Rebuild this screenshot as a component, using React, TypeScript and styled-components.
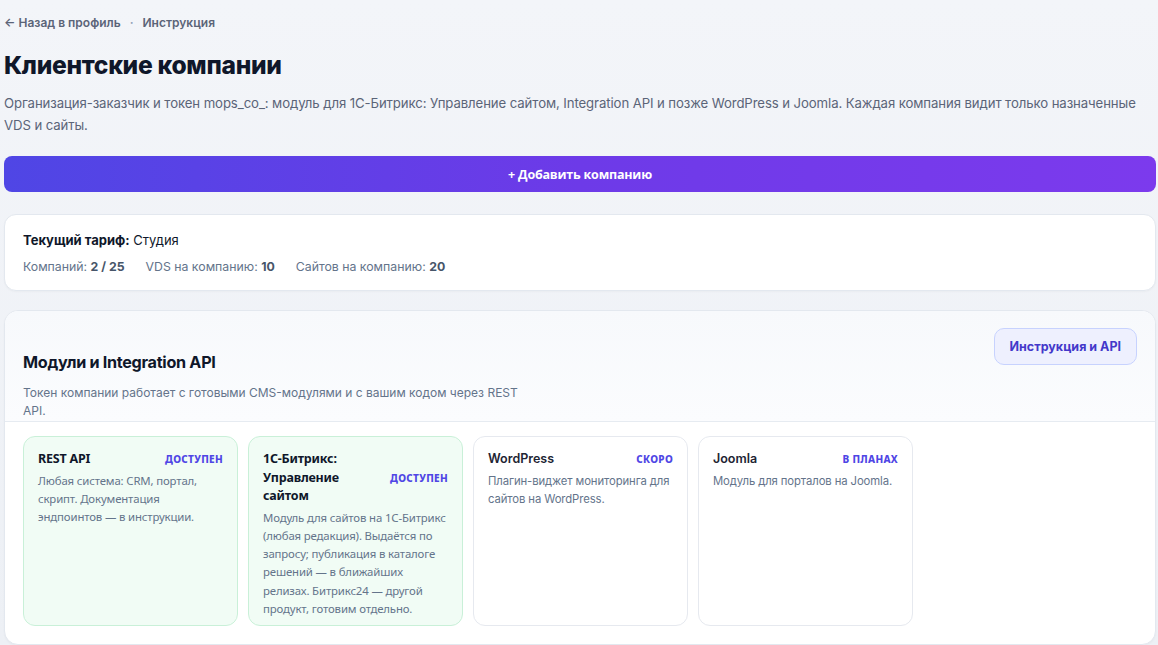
import React from 'react';
import styled, { createGlobalStyle } from 'styled-components';

const Global = createGlobalStyle`
  html, body {
    margin: 0;
    padding: 0;
    background: #eff2f7;
  }
  body {
    font-family: Inter, "Noto Sans", sans-serif;
    color: #0f172a;
  }
`

const Page = styled.div`
  padding: 12px 2px 0 4px;
  background: linear-gradient(180deg, #f3f5f9 0%, #edf0f5 100%);
  min-height: 645px;
  box-sizing: border-box;
`

const Crumbs = styled.div`
  display: flex;
  align-items: center;
  gap: 9px;
  font-size: 12px;
  font-weight: 600;
  color: #5b6478;
  height: 20px;
`

const Dot = styled.span`
  color: #94a3b8;
`

const Title = styled.h1`
  margin: 18px 0 0;
  font-size: 24.6px;
  line-height: 30px;
  font-weight: 800;
  letter-spacing: -0.3px;
  color: #0f172a;
`

const Lead = styled.p`
  margin: 12px 0 0;
  font-size: 13.2px;
  line-height: 22px;
  letter-spacing: -0.1px;
  color: #5b6478;
  max-width: 1140px;
`

const AddButton = styled.button`
  display: block;
  width: 100%;
  height: 36px;
  margin-top: 20px;
  border: 0;
  border-radius: 8px;
  background: linear-gradient(90deg, #4f46e5 0%, #6d3ae8 50%, #7c3aed 100%);
  color: #fff;
  font-family: "Open Sans", sans-serif;
  font-size: 12.5px;
  font-weight: 700;
  letter-spacing: -0.2px;
  cursor: pointer;
`

const Card = styled.section`
  margin-top: 22px;
  background: #fff;
  border: 1px solid #e3e8ef;
  border-radius: 12px;
  box-shadow: 0 1px 2px rgba(15, 23, 42, 0.03);
`

const Tariff = styled(Card)`
  padding: 16px 18px 14px;
`

const TariffName = styled.div`
  font-size: 13px;
  line-height: 18px;
  color: #0f172a;
  b {
    font-weight: 700;
  }
`

const Stats = styled.div`
  display: flex;
  gap: 21px;
  margin-top: 9px;
  font-size: 12.3px;
  line-height: 18px;
  color: #64748b;
  b {
    font-weight: 700;
    color: #475569;
  }
`

const Modules = styled(Card)`
  margin-top: 19px;
  border-radius: 14px;
  overflow: hidden;
`

const ModHead = styled.div`
  display: flex;
  justify-content: space-between;
  align-items: flex-start;
  padding: 17px 18px 1px;
  background: linear-gradient(180deg, #f7f9fc 0%, #fbfcfe 100%);
  border-bottom: 1px solid #e6ebf1;
`

const ModTitle = styled.h2`
  margin: 23px 0 0;
  font-size: 16.2px;
  line-height: 22px;
  font-weight: 700;
  letter-spacing: -0.3px;
  color: #0f172a;
`

const ModLead = styled.p`
  margin: 11px 0 0;
  max-width: 500px;
  font-size: 12px;
  line-height: 18px;
  color: #64748b;
`

const GhostButton = styled.button`
  height: 37px;
  padding: 0 15px;
  border: 1px solid #c7d2fe;
  border-radius: 10px;
  background: #eef0fe;
  color: #4338ca;
  font-family: Inter, sans-serif;
  font-size: 12.5px;
  font-weight: 700;
  cursor: pointer;
`

const Grid = styled.div`
  display: grid;
  grid-template-columns: repeat(4, 215px);
  gap: 10px;
  padding: 14px 18px 18px;
`

const ModCard = styled.div<{ $ready?: boolean }>`
  height: 190px;
  box-sizing: border-box;
  padding: 13px 14px;
  border-radius: 12px;
  border: 1px solid ${p => (p.$ready ? '#c9f0d8' : '#e6e9ef')};
  background: ${p => (p.$ready ? '#f1fcf5' : '#fff')};
`

const CardTop = styled.div`
  display: flex;
  justify-content: space-between;
  align-items: center;
  gap: 8px;
`

const CardName = styled.div<{ $ready?: boolean }>`
  font-family: ${p => (p.$ready ? '"Noto Sans", sans-serif' : 'Inter, sans-serif')};
  font-size: 12.5px;
  line-height: 18.5px;
  font-weight: ${p => (p.$ready ? 700 : 600)};
  letter-spacing: ${p => (p.$ready ? '-0.2px' : '0')};
  color: ${p => (p.$ready ? '#0f172a' : '#1e2433')};
  max-width: 110px;
`

const Badge = styled.span`
  font-family: "Noto Sans", sans-serif;
  font-size: 10px;
  font-weight: 800;
  letter-spacing: 0.3px;
  text-transform: uppercase;
  color: #4f46e5;
  white-space: nowrap;
`

const CardText = styled.p<{ $ready?: boolean }>`
  margin: 3px 0 0;
  font-family: ${p => (p.$ready ? '"Noto Sans", sans-serif' : 'Inter, sans-serif')};
  font-size: ${p => (p.$ready ? '11.4px' : '11.3px')};
  letter-spacing: ${p => (p.$ready ? '-0.15px' : '-0.1px')};
  line-height: 18.3px;
  color: #64748b;
`

const modules = [
  { name: 'REST API', badge: 'доступен', ready: true, text: 'Любая система: CRM, портал, скрипт. Документация эндпоинтов — в инструкции.' },
  { name: '1С-Битрикс: Управление сайтом', badge: 'доступен', ready: true, text: 'Модуль для сайтов на 1С-Битрикс (любая редакция). Выдаётся по запросу; публикация в каталоге решений — в ближайших релизах. Битрикс24 — другой продукт, готовим отдельно.' },
  { name: 'WordPress', badge: 'скоро', ready: false, text: 'Плагин-виджет мониторинга для сайтов на WordPress.' },
  { name: 'Joomla', badge: 'в планах', ready: false, text: 'Модуль для порталов на Joomla.' },
]

export default function App() {
  return (
    <Page>
      <Global />
      <Crumbs>
        <span>← Назад в профиль</span>
        <Dot>·</Dot>
        <span>Инструкция</span>
      </Crumbs>
      <Title>Клиентские компании</Title>
      <Lead>
        Организация-заказчик и токен mops_co_: модуль для 1С-Битрикс: Управление сайтом, Integration API и позже WordPress и Joomla. Каждая компания видит только назначенные VDS и сайты.
      </Lead>
      <AddButton>+ Добавить компанию</AddButton>

      <Tariff>
        <TariffName><b>Текущий тариф:</b> Студия</TariffName>
        <Stats>
          <span>Компаний: <b>2 / 25</b></span>
          <span>VDS на компанию: <b>10</b></span>
          <span>Сайтов на компанию: <b>20</b></span>
        </Stats>
      </Tariff>

      <Modules>
        <ModHead>
          <div>
            <ModTitle>Модули и Integration API</ModTitle>
            <ModLead>Токен компании работает с готовыми CMS-модулями и с вашим кодом через REST API.</ModLead>
          </div>
          <GhostButton>Инструкция и API</GhostButton>
        </ModHead>
        <Grid>
          {modules.map((m, i) => (
            <ModCard key={i} $ready={m.ready}>
              <CardTop>
                <CardName $ready={m.ready}>{m.name}</CardName>
                <Badge>{m.badge}</Badge>
              </CardTop>
              <CardText $ready={m.ready}>{m.text}</CardText>
            </ModCard>
          ))}
        </Grid>
      </Modules>
    </Page>
  )
}
